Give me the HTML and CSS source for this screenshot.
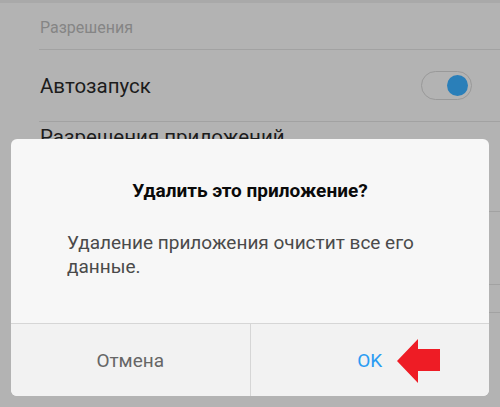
FILE: index.html
```html
<!DOCTYPE html>
<html lang="ru">
<head>
    <meta charset="UTF-8">
    <meta name="viewport" content="width=device-width, initial-scale=1.0">
    <title>Удалить приложение</title>
    <link rel="stylesheet" href="styles.css">
</head>
<body>
    <div class="topbar"></div>
    <div class="subheader">Разрешения</div>
    <div class="list">
        <div class="row row-toggle">
            <span class="row-title">Автозапуск</span>
            <span class="toggle"><span class="knob"></span></span>
        </div>
        <div class="row row-tall">
            <span class="row-title">Разрешения приложений</span>
        </div>
        <div class="row row-mid"></div>
        <div class="row row-short"></div>
    </div>

    <div class="dialog">
        <div class="dialog-content">
            <div class="dialog-title">Удалить это приложение?</div>
            <div class="dialog-text">Удаление приложения очистит все его данные.</div>
        </div>
        <div class="dialog-buttons">
            <div class="btn btn-cancel">Отмена</div>
            <div class="btn btn-ok">OK</div>
        </div>
    </div>

    <svg class="arrow" width="47" height="47" viewBox="0 0 47 47">
        <polygon points="2,24 23,2 23,12 45,12 45,34 23,34 23,46" fill="#ee1c25"/>
    </svg>
</body>
</html>
```

FILE: styles.css
```css
body {
    font-family: Roboto, "Noto Sans", sans-serif;
    background-color: #b3b3b3;
    margin: 0;
    width: 500px;
    height: 407px;
    overflow: hidden;
}
.topbar {
    height: 3px;
    background-color: #a9a9a9;
}
.subheader {
    height: 20px;
    padding: 15px 0 11px 1px;
    margin-left: 39px;
    line-height: 20px;
    font-size: 16px;
    color: #858585;
    border-bottom: 1px solid #a2a2a2;
}
.list {
    margin-left: 39px;
}
.row {
    display: flex;
    align-items: center;
    border-bottom: 1px solid #a2a2a2;
    padding-left: 1px;
    box-sizing: border-box;
}
.row-title {
    font-size: 20.5px;
    line-height: 24px;
    color: #1c1c1c;
}
.row-toggle {
    height: 72px;
    justify-content: space-between;
    padding-right: 28px;
}
.row-tall {
    height: 90px;
    align-items: flex-start;
    padding-top: 3px;
}
.row-mid {
    height: 73px;
}
.row-short {
    height: 28px;
}
.toggle {
    width: 46px;
    height: 27px;
    padding-right: 3px;
    border: 1px solid #999999;
    border-radius: 15px;
    display: flex;
    align-items: center;
    justify-content: flex-end;
}
.knob {
    width: 21px;
    height: 21px;
    border-radius: 50%;
    background-color: #2a7fb9;
}
.dialog {
    position: absolute;
    left: 11px;
    top: 139px;
    width: 478px;
    height: 257px;
    background-color: #f7f7f7;
    border-radius: 6px;
    overflow: hidden;
    display: flex;
    flex-direction: column;
}
.dialog-content {
    padding: 40px 20px 0 56px;
    height: 144px;
}
.dialog-title {
    font-size: 19px;
    font-weight: bold;
    line-height: 24px;
    color: #0a0a0a;
    text-align: center;
    margin-left: -36px;
}
.dialog-text {
    margin-top: 28px;
    font-size: 19px;
    line-height: 24px;
    color: #4a4a4a;
}
.dialog-buttons {
    flex: 1;
    display: flex;
    border-top: 1px solid #d6d6d6;
    background-color: #f2f2f2;
}
.btn {
    flex: 1;
    display: flex;
    align-items: center;
    justify-content: center;
    font-size: 19px;
}
.btn-cancel {
    color: #666666;
    border-right: 1px solid #d6d6d6;
}
.btn-ok {
    color: #2a9cf3;
}
.arrow {
    position: absolute;
    left: 395px;
    top: 337px;
}
```
